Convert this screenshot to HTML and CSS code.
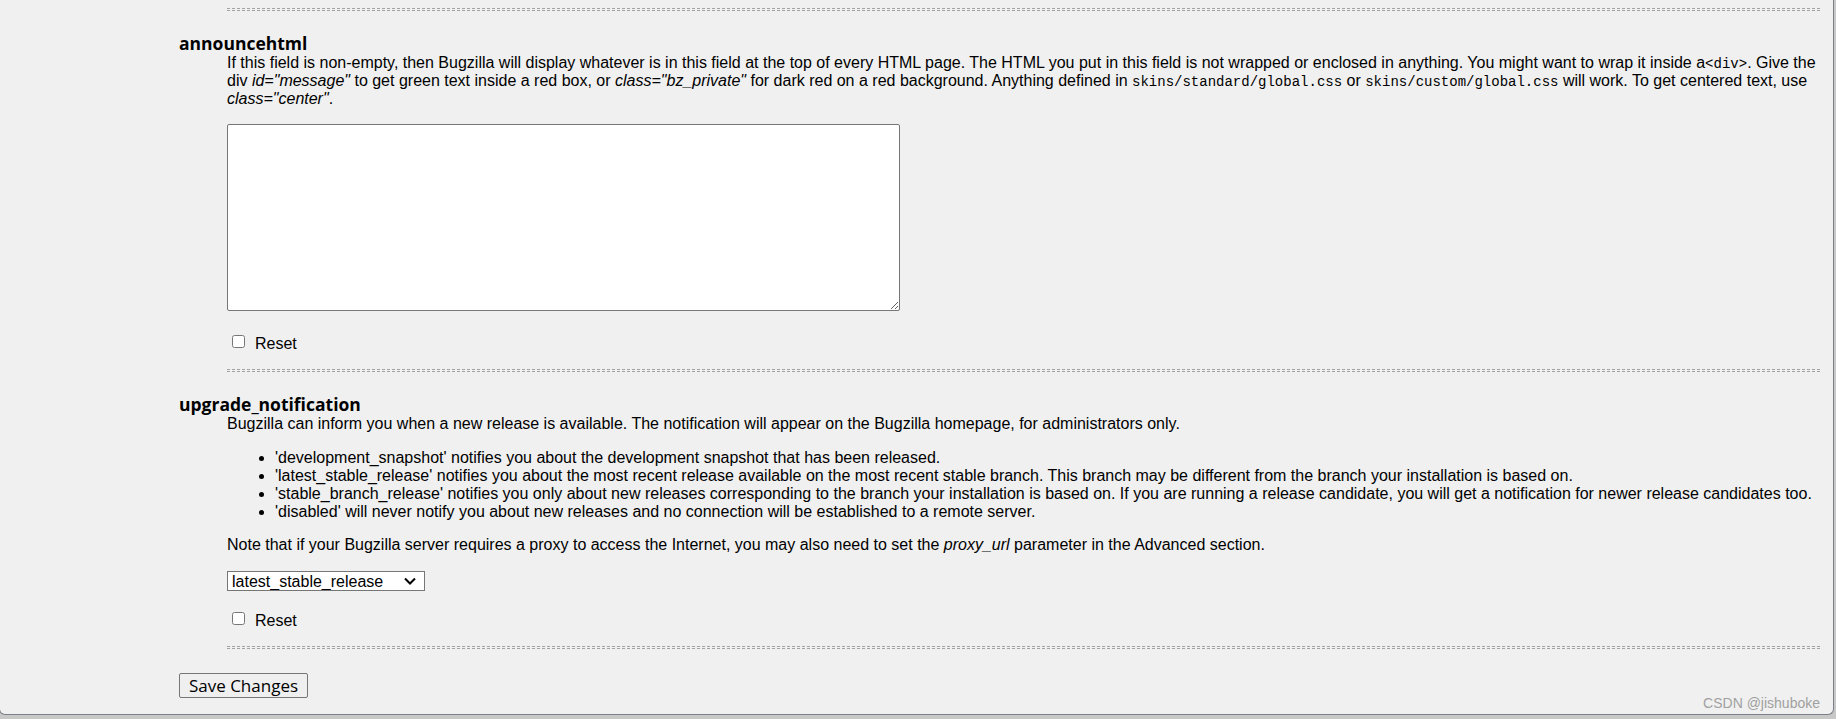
FILE: index.html
```html
<!DOCTYPE html>
<html>
<head>
    <title>Parameters: General</title>
    <link rel="stylesheet" href="styles.css">
</head>
<body>
    <div class="panel">
        <form class="params" id="paramsForm">
            <div class="prev-param">
                <hr>
            </div>

            <dl>
                <dt>announcehtml</dt>
                <dd>
                    <p class="desc">If this field is non-empty, then Bugzilla will display whatever is in this field at the top of every HTML page. The HTML you put in this field is not wrapped or enclosed in anything. You might want to wrap it inside a<code>&lt;div&gt;</code>. Give the div <em>id="message"</em> to get green text inside a red box, or <em>class="bz_private"</em> for dark red on a red background. Anything defined in <code>skins/standard/global.css</code> or <code>skins/custom/global.css</code> will work. To get centered text, use <em>class="center"</em>.</p>

                    <textarea name="announcehtml" id="announcehtml"></textarea>

                    <div class="reset">
                        <input type="checkbox" id="reset-announcehtml" name="reset-announcehtml">
                        <label for="reset-announcehtml">Reset</label>
                    </div>
                    <hr>
                </dd>

                <dt>upgrade_notification</dt>
                <dd>
                    <p class="desc">Bugzilla can inform you when a new release is available. The notification will appear on the Bugzilla homepage, for administrators only.</p>
                    <ul>
                        <li>'development_snapshot' notifies you about the development snapshot that has been released.</li>
                        <li>'latest_stable_release' notifies you about the most recent release available on the most recent stable branch. This branch may be different from the branch your installation is based on.</li>
                        <li>'stable_branch_release' notifies you only about new releases corresponding to the branch your installation is based on. If you are running a release candidate, you will get a notification for newer release candidates too.</li>
                        <li>'disabled' will never notify you about new releases and no connection will be established to a remote server.</li>
                    </ul>
                    <p class="note">Note that if your Bugzilla server requires a proxy to access the Internet, you may also need to set the <em>proxy_url</em> parameter in the Advanced section.</p>

                    <select name="upgrade_notification" id="upgrade_notification">
                        <option value="development_snapshot">development_snapshot</option>
                        <option value="latest_stable_release" selected>latest_stable_release</option>
                        <option value="stable_branch_release">stable_branch_release</option>
                        <option value="disabled">disabled</option>
                    </select>

                    <div class="reset reset-select">
                        <input type="checkbox" id="reset-upgrade_notification" name="reset-upgrade_notification">
                        <label for="reset-upgrade_notification">Reset</label>
                    </div>
                    <hr class="last-rule">
                </dd>
            </dl>

            <input type="submit" value="Save Changes">
        </form>

        <span class="watermark">CSDN @jishuboke</span>
    </div>
</body>
</html>
```

FILE: styles.css
```css
body {
    margin: 0;
    background-color: #c8c8c8;
    font-family: "Liberation Sans", Arial, sans-serif;
    font-size: 16px;
    line-height: 18px;
    color: #000;
}
.panel {
    position: relative;
    margin: 0 2px 0 -1px;
    background-color: #f0f0f0;
    border: 1px solid #7a7f8a;
    border-top: none;
    border-radius: 0 0 6px 6px;
}
.params {
    padding: 8px 13px 16px 179px;
}
hr {
    height: 1px;
    margin: 16px 0 0 0;
    border: none;
    border-top: 1px dashed #a3a3a3;
    border-bottom: 1px dashed #a3a3a3;
}
.prev-param {
    margin-left: 48px;
}
.prev-param hr {
    margin-top: 0;
}
dl {
    margin: 0;
}
dt {
    margin-top: 22px;
    font-family: "Open Sans", sans-serif;
    font-weight: bold;
    font-size: 17.5px;
    line-height: 21px;
}
dd {
    margin-left: 48px;
}
.desc,
.note {
    margin: 0;
}
.note {
    margin-top: 15px;
}
code {
    font-family: "Liberation Mono", monospace;
    font-size: 14px;
    line-height: 1;
}
textarea {
    display: block;
    box-sizing: border-box;
    width: 673px;
    height: 187px;
    margin-top: 16px;
    border: 1px solid #767676;
    border-radius: 2px;
    background-color: #fff;
}
.reset {
    display: flex;
    align-items: flex-start;
    margin-top: 24px;
}
.reset input {
    width: 13px;
    height: 13px;
    margin: 0 0 0 5px;
}
.reset label {
    margin-left: 10px;
}
.reset-select {
    margin-top: 21px;
}
ul {
    margin: 16px 0 0 0;
    padding-left: 48px;
}
select {
    display: block;
    box-sizing: border-box;
    width: 198px;
    height: 20px;
    margin-top: 17px;
    padding: 0 0 0 4px;
    font-family: "Liberation Sans", Arial, sans-serif;
    font-size: 16px;
    color: #000;
    border: 1px solid #767676;
    border-radius: 0;
    -webkit-appearance: none;
    appearance: none;
    background: #fff url("data:image/svg+xml,%3Csvg xmlns='http://www.w3.org/2000/svg' width='12' height='8' viewBox='0 0 12 8'%3E%3Cpath d='M1 1.5l5 5 5-5' fill='none' stroke='%23000' stroke-width='2'/%3E%3C/svg%3E") no-repeat right 8px center;
}
input[type="submit"] {
    display: block;
    box-sizing: border-box;
    width: 129px;
    height: 25px;
    margin-top: 24px;
    padding: 0;
    font-family: "Open Sans", sans-serif;
    font-size: 17px;
    color: #000;
    background-color: #efefef;
    border: 1px solid #767676;
    border-radius: 2px;
}
.last-rule {
    margin-top: 16px;
}
.watermark {
    position: absolute;
    right: 13px;
    bottom: 3px;
    font-size: 14px;
    line-height: 16px;
    color: #a0a0a0;
}
```
